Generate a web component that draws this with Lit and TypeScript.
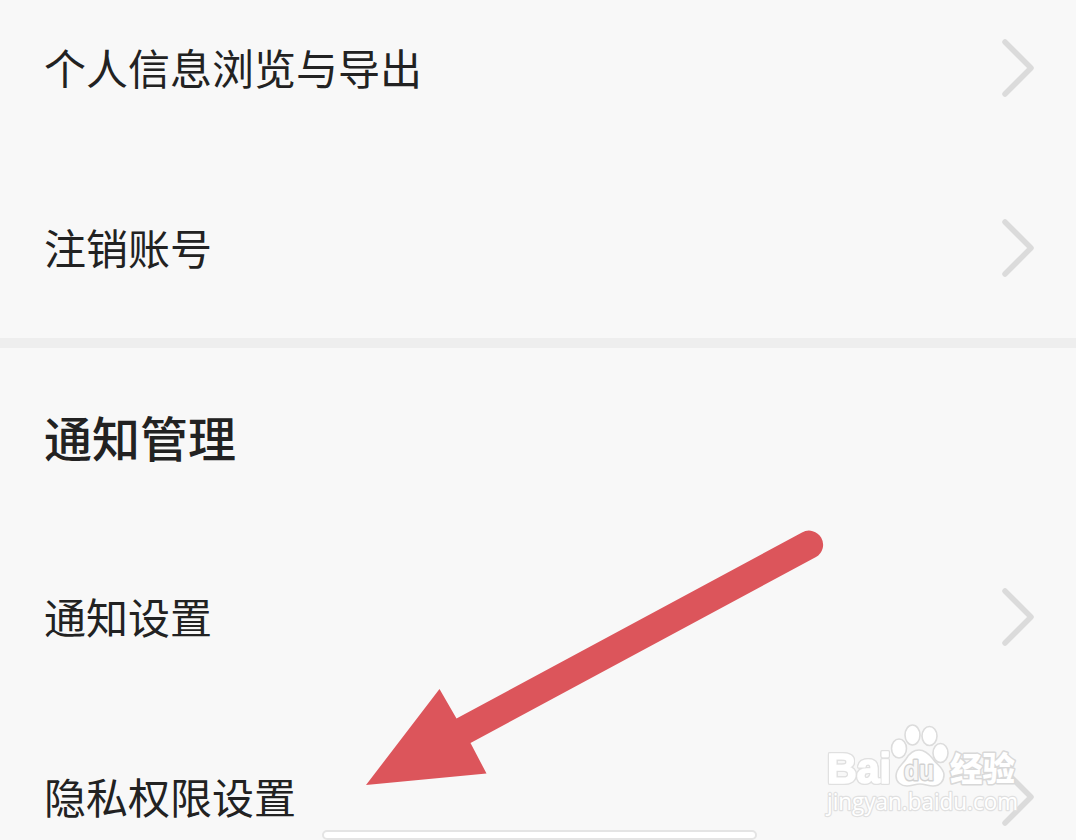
import {customElement, property} from "lit/decorators.js";
import {css, html, LitElement} from "lit";

@customElement("settings-row")
export class SettingsRow extends LitElement {
    @property() label = "";

    protected override render() {
        return html`
            <span class="label">${this.label}</span>
            <svg class="chevron" viewBox="0 0 36 60" fill="none">
                <path d="M5 4L31 30L5 56"></path>
            </svg>
        `;
    }

    static override styles = css`
        :host {
            display: flex;
            align-items: center;
            justify-content: space-between;
            box-sizing: border-box;
            height: 180px;
            padding: 0 40px 0 44px;
        }
        .label {
            font-size: 42px;
            line-height: 60px;
            padding-bottom: 2px;
            color: #222;
            white-space: nowrap;
        }
        .chevron {
            width: 36px;
            height: 60px;
            stroke: #dbdbdb;
            stroke-width: 5.5;
            stroke-linecap: round;
            stroke-linejoin: round;
        }
    `;
}

@customElement("site-watermark")
export class SiteWatermark extends LitElement {
    protected override render() {
        return html`
            <svg viewBox="0 0 206 106">
                <g class="mark">
                    <text class="latin" x="7" y="63" textLength="64" lengthAdjust="spacingAndGlyphs">Bai</text>
                    <ellipse cx="79" cy="28.5" rx="7.500" ry="9.5"></ellipse>
                    <ellipse cx="92.500" cy="15" rx="7.500" ry="10"></ellipse>
                    <ellipse cx="109.500" cy="16" rx="7.500" ry="9.500"></ellipse>
                    <ellipse cx="120.500" cy="33" rx="7.500" ry="9.500"></ellipse>
                    <path d="M99 30C93 30 89 34 86 39C82 45 76 48 76 56C76 62 81 66 87 66C92 66 95 64 100 64C105 64 108 66 113 66C120 66 124 61 124 55C124 48 117 45 113 39C109 34 105 30 99 30Z"></path>
                    <text class="du" x="84" y="60" textLength="30" lengthAdjust="spacingAndGlyphs">du</text>
                    <text class="han" x="130" y="61" textLength="65" lengthAdjust="spacingAndGlyphs">经验</text>
                    <text class="url" x="7" y="90" textLength="191" lengthAdjust="spacingAndGlyphs">jingyan.baidu.com</text>
                </g>
            </svg>
        `;
    }

    static override styles = css`
        :host,
        svg {
            display: block;
            width: 206px;
            height: 106px;
        }
        .mark {
            fill: #fff;
            stroke: #dcdcdc;
            stroke-width: 1.6;
            stroke-linejoin: round;
        }
        text {
            paint-order: stroke;
        }
        /* white stroke thickens the letters, the shadows draw their outline */
        .latin {
            font: bold 42px "Liberation Sans", sans-serif;
            stroke: #fff;
            stroke-width: 1.6;
            filter: drop-shadow(1px 0 0 #e0e0e0) drop-shadow(-1px 0 0 #e0e0e0) drop-shadow(0 1px 0 #e0e0e0) drop-shadow(0 -1px 0 #e0e0e0);
        }
        .du {
            font: bold 28px "Liberation Sans", sans-serif;
            fill: #f7f7f7;
            stroke: #d2d2d2;
            stroke-width: 3;
        }
        .han {
            font: 900 33px "Noto Sans CJK SC", sans-serif;
            stroke: #d8d8d8;
            stroke-width: 3;
        }
        .url {
            font: 500 23px "Open Sans", sans-serif;
            stroke: #e0e0e0;
            stroke-width: 2.4;
        }
    `;
}

@customElement("app-root")
export class AppRoot extends LitElement {
    private accountItems = ["个人信息浏览与导出", "注销账号"];
    private noticeItems = ["通知设置", "隐私权限设置"];

    protected override render() {
        return html`
            <div class="list">
                ${this.accountItems.map((label) => html`<settings-row .label=${label}></settings-row>`)}
                <div class="divider"></div>
                <h2 class="title">通知管理</h2>
                ${this.noticeItems.map((label) => html`<settings-row .label=${label}></settings-row>`)}
            </div>
            <svg class="arrow" viewBox="0 0 460 258">
                <path d="M0 256L73.500 160L90.500 189.500L436 3.500A14 14 0 0 1 450 28L104.500 214L120.500 244.500Z"></path>
            </svg>
            <site-watermark class="watermark"></site-watermark>
            <div class="home-bar"></div>
        `;
    }

    static override styles = css`
        :host {
            display: block;
            position: relative;
            height: 840px;
            overflow: hidden;
            background: #f8f8f8;
            font-family: "Noto Sans CJK SC", sans-serif;
        }
        /* the list is scrolled, its first row is cut by the top edge */
        .list {
            display: flow-root;
            margin-top: -22px;
        }
        .divider {
            height: 10px;
            background: #eee;
        }
        .title {
            display: flex;
            align-items: center;
            box-sizing: border-box;
            height: 179px;
            margin: 0;
            padding: 0 44px 4px;
            font-size: 48px;
            font-weight: 500;
            color: #222;
        }
        .arrow {
            position: absolute;
            left: 366px;
            top: 529px;
            width: 460px;
            height: 258px;
            fill: #dc555b;
        }
        .watermark {
            position: absolute;
            left: 820px;
            top: 720px;
        }
        .home-bar {
            position: absolute;
            left: 322px;
            top: 830px;
            box-sizing: border-box;
            width: 435px;
            height: 10px;
            border: 2px solid #e4e4e4;
            border-radius: 5px;
            background: #fff;
        }
    `;
}

declare global {
    interface HTMLElementTagNameMap {
        "settings-row": SettingsRow;
        "site-watermark": SiteWatermark;
        "app-root": AppRoot;
    }
}
